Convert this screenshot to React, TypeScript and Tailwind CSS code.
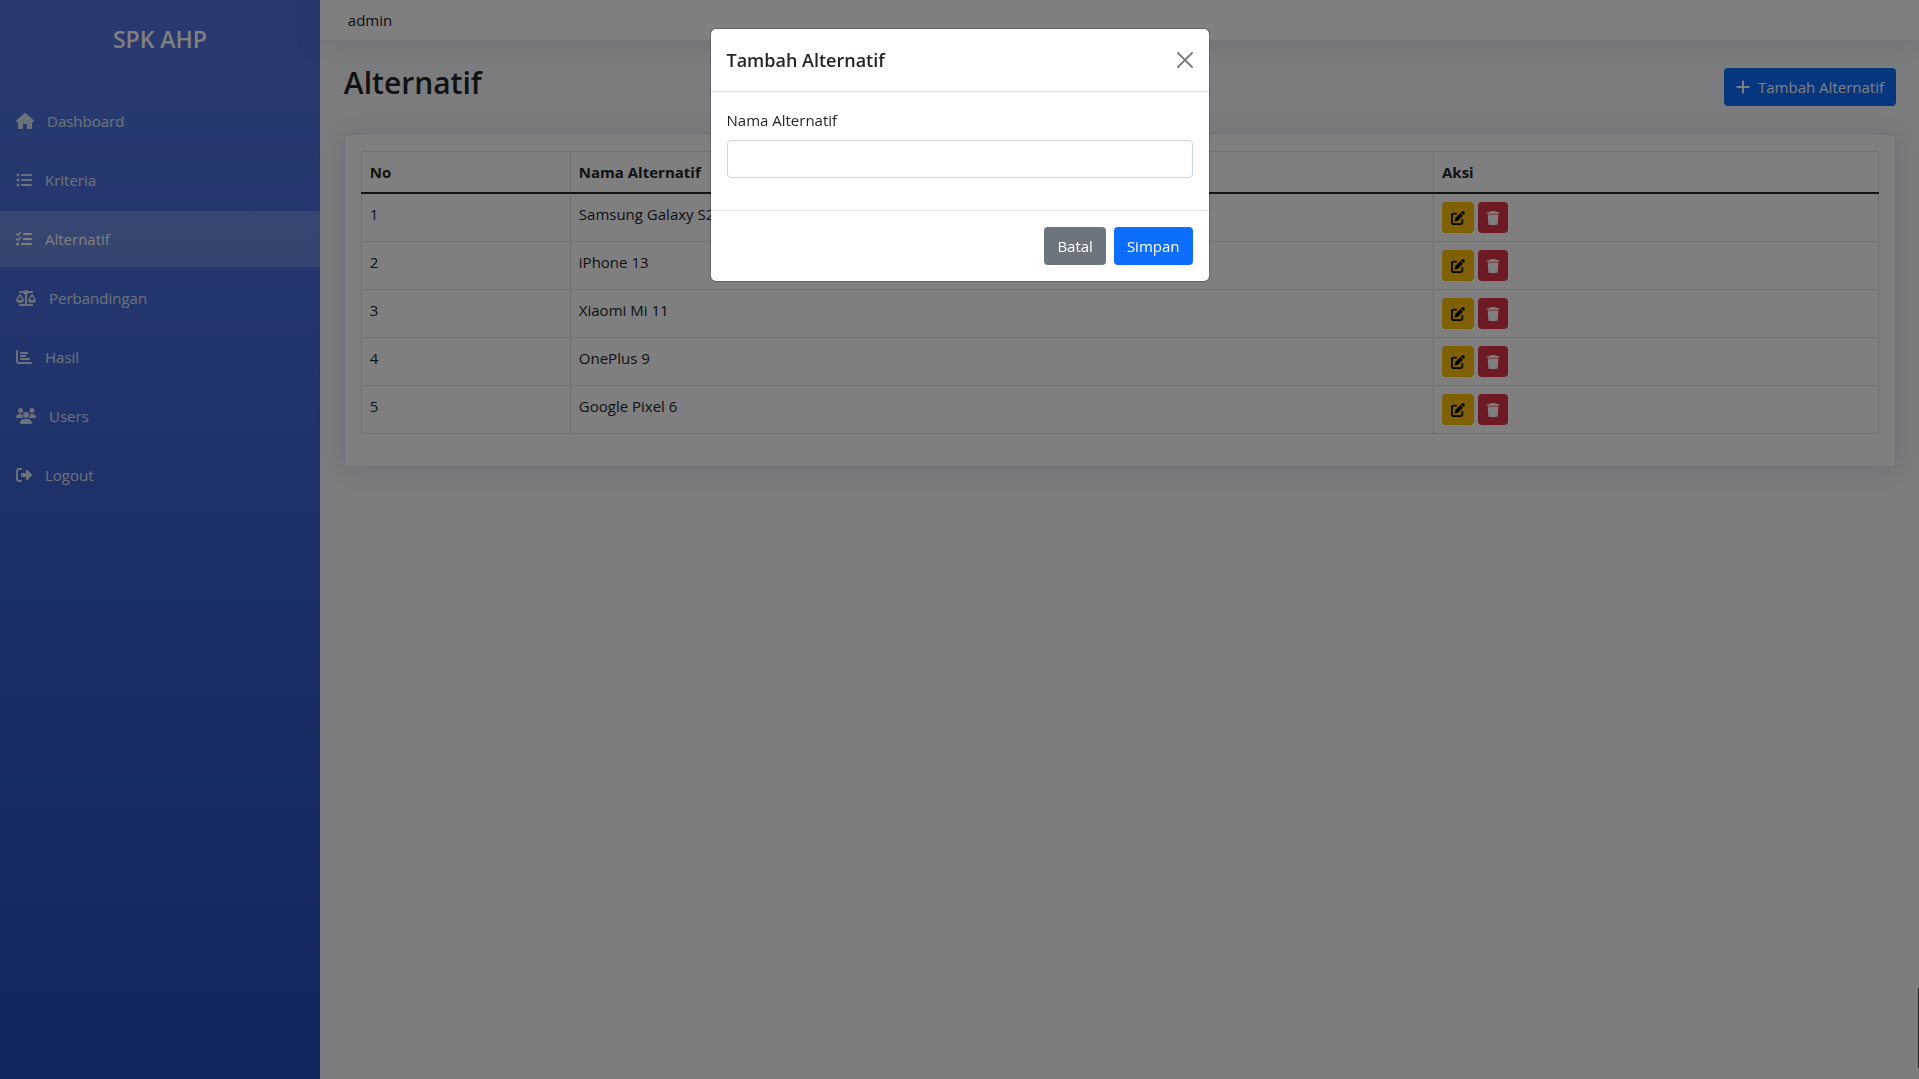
import { useState } from 'react';
import {
  FaChartBar,
  FaHouse,
  FaListCheck,
  FaListUl,
  FaPenToSquare,
  FaPlus,
  FaRightFromBracket,
  FaScaleBalanced,
  FaTrash,
  FaUsers,
} from 'react-icons/fa6';

const menu = [
  { label: 'Dashboard', icon: FaHouse, width: 'w-[18px]' },
  { label: 'Kriteria', icon: FaListUl, width: 'w-4' },
  { label: 'Alternatif', icon: FaListCheck, width: 'w-4', active: true },
  { label: 'Perbandingan', icon: FaScaleBalanced, width: 'w-5' },
  { label: 'Hasil', icon: FaChartBar, width: 'w-4' },
  { label: 'Users', icon: FaUsers, width: 'w-5' },
  { label: 'Logout', icon: FaRightFromBracket, width: 'w-4' },
];

const alternatives = ['Samsung Galaxy S21', 'iPhone 13', 'Xiaomi Mi 11', 'OnePlus 9', 'Google Pixel 6'];

function Sidebar() {
  return (
    <aside className="w-1/6 shrink-0 bg-linear-to-b/srgb from-[#4e73df] from-10% to-[#224abe] text-white">
      <h2 className="pt-[25px] pb-[39px] text-center text-[23px] leading-[29px] font-semibold">SPK AHP</h2>
      <nav className="flex flex-col gap-[3px]">
        {menu.map(({ label, icon: Icon, width, active }) => (
          <a
            key={label}
            href="#"
            className={`flex items-center gap-[13px] p-4 leading-6 ${active ? 'bg-white/20 text-white' : 'text-white/80'}`}
          >
            <Icon className={`h-4 shrink-0 ${width}`} />
            {label}
          </a>
        ))}
      </nav>
    </aside>
  );
}

function AlternativeTable() {
  return (
    <table className="mb-4 w-full table-fixed border-collapse text-left">
      <thead>
        <tr className="border-b-2 border-[#212529]">
          <th className="w-[209px] border-x border-t border-x-[#dee2e6] border-t-[#dee2e6] p-2 font-bold">No</th>
          <th className="border-x border-t border-x-[#dee2e6] border-t-[#dee2e6] p-2 font-bold">Nama Alternatif</th>
          <th className="w-[445px] border-x border-t border-x-[#dee2e6] border-t-[#dee2e6] p-2 font-bold">Aksi</th>
        </tr>
      </thead>
      <tbody>
        {alternatives.map((name, i) => (
          <tr key={name} className="align-top">
            <td className="border border-[#dee2e6] p-2">{i + 1}</td>
            <td className="border border-[#dee2e6] p-2">{name}</td>
            <td className="border border-[#dee2e6] p-2">
              <div className="flex gap-1">
                <button type="button" aria-label="Edit" className="flex h-[31px] w-8 items-center justify-center rounded bg-[#ffc107] text-sm text-black">
                  <FaPenToSquare />
                </button>
                <button type="button" aria-label="Hapus" className="flex h-[31px] w-[30px] items-center justify-center rounded bg-[#dc3545] text-sm text-white">
                  <FaTrash />
                </button>
              </div>
            </td>
          </tr>
        ))}
      </tbody>
    </table>
  );
}

function AddModal({ onClose }: { onClose: () => void }) {
  return (
    <div className="fixed inset-0 bg-black/50 px-4">
      <div
        role="dialog"
        aria-labelledby="modal-title"
        className="mx-auto mt-7 max-w-[500px] rounded-md border border-black/20 bg-white bg-clip-padding"
      >
        <div className="flex items-center justify-between border-b border-[#dee2e6] p-4">
          <h5 id="modal-title" className="text-lg leading-[30px] font-semibold">Tambah Alternatif</h5>
          <button type="button" aria-label="Close" className="opacity-50" onClick={onClose}>
            <svg className="h-4 w-4" viewBox="0 0 16 16" fill="#000">
              <path d="M.293.293a1 1 0 0 1 1.414 0L8 6.586 14.293.293a1 1 0 1 1 1.414 1.414L9.414 8l6.293 6.293a1 1 0 0 1-1.414 1.414L8 9.414l-6.293 6.293a1 1 0 0 1-1.414-1.414L6.586 8 .293 1.707a1 1 0 0 1 0-1.414z" />
            </svg>
          </button>
        </div>
        <div className="p-4">
          <label htmlFor="nama" className="mb-2 block">Nama Alternatif</label>
          <input id="nama" type="text" className="mb-4 block h-[38px] w-full rounded border border-[#ced4da] px-3 outline-none" />
        </div>
        <div className="flex justify-end gap-2 border-t border-[#dee2e6] p-4">
          <button type="button" className="h-[38px] rounded bg-[#6c757d] px-[13px] text-white" onClick={onClose}>Batal</button>
          <button type="button" className="h-[38px] rounded bg-[#0d6efd] px-[13px] text-white">Simpan</button>
        </div>
      </div>
    </div>
  );
}

export default function App() {
  const [open, setOpen] = useState(true);

  return (
    <div className="flex min-h-screen bg-[#f8f9fc] font-['Open_Sans',sans-serif] text-[15px] leading-6 text-[#212529]">
      <Sidebar />
      <div className="min-w-0 flex-1">
        <header className="bg-white px-7 py-2 shadow-[0_2px_28px_0_rgba(58,59,69,0.15)]">admin</header>
        <main className="py-6 pr-[23px] pl-6">
          <div className="mb-6 flex items-center justify-between">
            <h1 className="mb-2 text-3xl leading-[38px] font-semibold">Alternatif</h1>
            <button
              type="button"
              className="flex h-[38px] items-center gap-2 rounded bg-[#0d6efd] px-3 text-white"
              onClick={() => setOpen(true)}
            >
              <FaPlus className="h-4 w-[14px]" />
              Tambah Alternatif
            </button>
          </div>
          <div className="rounded border border-[#e3e6f0] bg-white p-4 shadow-[0_2px_28px_0_rgba(58,59,69,0.15)]">
            <AlternativeTable />
          </div>
        </main>
      </div>
      {open && <AddModal onClose={() => setOpen(false)} />}
      <div className="fixed right-0 bottom-[11px] h-20 w-px bg-[#222222]" />
    </div>
  );
}
